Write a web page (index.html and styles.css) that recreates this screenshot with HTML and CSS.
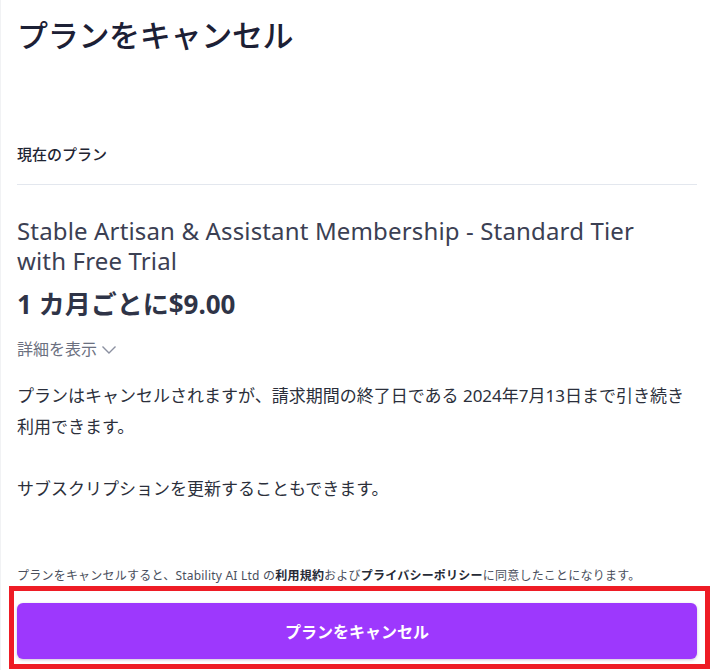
FILE: index.html
```html
<!DOCTYPE html>
<html lang="ja">
<head>
<meta charset="utf-8">
<link rel="stylesheet" href="styles.css">
</head>
<body>
<div class="page">
  <h1 class="title">プランをキャンセル</h1>
  <div class="section-label">現在のプラン</div>
  <hr class="divider">
  <div class="product">Stable Artisan &amp; Assistant Membership - Standard Tier<br>with Free Trial</div>
  <div class="price">1 カ月ごとに$9.00</div>
  <div class="details">詳細を表示<svg class="chev" width="16" height="10" viewBox="0 0 16 10"><path d="M1.5 1.5 L8 8 L14.5 1.5" fill="none" stroke="#8b90a0" stroke-width="1.4"/></svg></div>
  <p class="para">プランはキャンセルされますが、請求期間の終了日である 2024年7月13日まで引き続き利用できます。</p>
  <p class="para para2">サブスクリプションを更新することもできます。</p>
  <p class="fine">プランをキャンセルすると、Stability AI Ltd の<b>利用規約</b>および<b>プライバシーポリシー</b>に同意したことになります。</p>
  <div class="highlight">
    <button class="cancel-btn">プランをキャンセル</button>
  </div>
</div>
</body>
</html>
```
FILE: styles.css
```css
html, body {
  margin: 0;
  padding: 0;
  background: #ffffff;
}
body {
  font-family: "Noto Sans", "Noto Sans CJK JP", sans-serif;
  width: 716px;
  height: 670px;
  overflow: hidden;
  border-left: 1px solid #f1f2f4;
  box-sizing: border-box;
  padding-left: 2px;
}
.page {
  padding-left: 14px;
  width: 680px;
}
.title {
  margin: 15px 0 0 0;
  font-size: 31px;
  line-height: 40px;
  font-weight: 500;
  color: #1c2035;
  letter-spacing: -0.3px;
}
.section-label {
  margin-top: 89px;
  font-size: 15px;
  line-height: 20px;
  font-weight: 500;
  color: #1f2533;
}
.divider {
  margin: 20px 0 0 0;
  border: none;
  border-top: 1px solid #e3e7ee;
  height: 0;
}
.product {
  margin-top: 31px;
  font-size: 24px;
  line-height: 30px;
  letter-spacing: 0.15px;
  color: #3b4053;
}
.price {
  margin-top: 12px;
  font-size: 26px;
  line-height: 32px;
  font-weight: 700;
  color: #2f3447;
}
.details {
  margin-top: 19px;
  font-size: 16px;
  line-height: 20px;
  color: #6b7080;
  display: flex;
  align-items: center;
  gap: 4px;
}
.chev {
  margin-top: 1px;
}
.para {
  margin: 21px 0 0 0;
  font-size: 17px;
  line-height: 31px;
  color: #2b2f3b;
  width: 678px;
}
.para2 {
  margin-top: 31px;
}
.fine {
  margin: 63px 0 0 0;
  font-size: 12px;
  line-height: 18px;
  letter-spacing: 0.22px;
  color: #4a4f5d;
  white-space: nowrap;
}
.fine b {
  color: #262a36;
  font-weight: 700;
}
.highlight {
  margin: 1px 0 0 -8px;
  width: 701px;
  box-sizing: border-box;
  border: 5px solid #ee1c25;
  padding: 12px 8px 5px 3px;
}
.cancel-btn {
  display: block;
  width: 680px;
  height: 56px;
  border: none;
  border-radius: 6px;
  background: #9d38fd;
  color: #ffffff;
  font-family: "Noto Sans CJK JP", sans-serif;
  font-size: 16px;
  font-weight: 700;
  box-shadow: 0 1px 3px rgba(60, 20, 100, 0.25);
}
```
